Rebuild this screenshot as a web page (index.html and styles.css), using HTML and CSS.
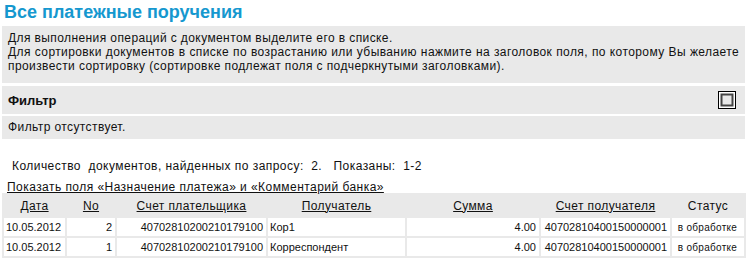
FILE: index.html
```html
<!DOCTYPE html>
<html lang="ru">
<head>
  <meta charset="UTF-8">
  <title>Все платежные поручения</title>
  <link rel="stylesheet" href="styles.css">
</head>
<body>
  <div class="page">
    <h1 class="title">Все платежные поручения</h1>

    <div class="hint">
      Для выполнения операций с документом выделите его в списке.<br>
      <span class="justify">Для сортировки документов в списке по возрастанию или убыванию нажмите на заголовок поля, по которому Вы желаете произвести сортировку (сортировке подлежат поля с подчеркнутыми заголовками).</span>
    </div>

    <div class="filter">
      <div class="filter-head">
        <span>Фильтр</span>
        <!-- expand button -->
        <svg class="filter-btn" width="18" height="18" viewBox="0 0 18 18">
          <rect x="0.5" y="0.5" width="17" height="17" fill="#fff" stroke="#000"/>
          <rect x="3.5" y="3.5" width="11" height="11" fill="#e9e9e9" stroke="#444" stroke-width="2"/>
        </svg>
      </div>
      <div class="filter-body">Фильтр отсутствует.</div>
    </div>

    <p class="count">Количество&nbsp; документов, найденных по запросу:&nbsp; 2.&nbsp;&nbsp; Показаны:&nbsp; 1-2</p>
    <a class="toggle" href="#">Показать поля «Назначение платежа» и «Комментарий банка»</a>

    <table class="docs">
      <thead>
        <tr>
          <th class="c-date"><a href="#">Дата</a></th>
          <th class="c-no"><a href="#">No</a></th>
          <th class="c-acc"><a href="#">Счет плательщика</a></th>
          <th class="c-rcp"><a href="#">Получатель</a></th>
          <th class="c-sum"><a href="#">Сумма</a></th>
          <th class="c-acc2"><a href="#">Счет получателя</a></th>
          <th class="c-st">Статус</th>
        </tr>
      </thead>
      <tbody>
        <tr>
          <td>10.05.2012</td>
          <td class="num">2</td>
          <td class="num">40702810200210179100</td>
          <td>Кор1</td>
          <td class="num">4.00</td>
          <td class="num">40702810400150000001</td>
          <td class="status">в обработке</td>
        </tr>
        <tr>
          <td>10.05.2012</td>
          <td class="num">1</td>
          <td class="num">40702810200210179100</td>
          <td>Корреспондент</td>
          <td class="num">4.00</td>
          <td class="num">40702810400150000001</td>
          <td class="status">в обработке</td>
        </tr>
      </tbody>
    </table>
  </div>
</body>
</html>
```

FILE: styles.css
```css
body {
  margin: 0;
  font-family: "Liberation Sans", Arial, sans-serif;
  font-size: 12px;
  color: #111;
  background: #fff;
}

.page {
  padding: 0 4px 0 2px;
}

.title {
  margin: 0;
  padding: 2px 0 0 2px;
  height: 24px;
  font-size: 18px;
  font-weight: bold;
  color: #1598cf;
}

.hint {
  background: #e9e9e9;
  padding: 5px 6px 10px 6px;
  line-height: 14px;
  letter-spacing: 0.4px;
}

.justify {
  display: block;
  text-align: justify;
}

.filter {
  margin-top: 3px;
}

.filter-head {
  display: flex;
  align-items: center;
  justify-content: space-between;
  height: 28px;
  padding: 0 9px 0 6px;
  background: #e9e9e9;
  font-size: 13px;
  font-weight: bold;
}

.filter-btn {
  display: block;
}

.filter-body {
  margin-top: 2px;
  height: 23px;
  line-height: 23px;
  padding: 0 6px;
  background: #e9e9e9;
  letter-spacing: 0.4px;
}

.count {
  margin: 20px 0 0 10px;
  line-height: 14px;
  letter-spacing: 0.45px;
}

.toggle {
  display: block;
  margin: 7px 0 0 5px;
  line-height: 14px;
  color: #111;
  letter-spacing: 0.45px;
}

.docs {
  margin-top: -1px;
  width: 744px;
  table-layout: fixed;
  border-collapse: separate;
  border-spacing: 2px;
  background: #e9e9e9;
}

.docs th,
.docs td {
  box-sizing: border-box;
  white-space: nowrap;
  overflow: hidden;
}

.docs th {
  height: 21px;
  padding: 0 3px;
  font-weight: normal;
  font-size: 12px;
  letter-spacing: 0.4px;
  text-align: center;
  background: #e9e9e9;
}

.docs th a {
  color: #111;
}

.docs td {
  height: 18px;
  padding: 0 3px 0 2px;
  font-size: 11px;
  background: #fff;
}

.docs td.num {
  text-align: right;
}

.docs td.status {
  font-size: 10px;
  letter-spacing: 0.3px;
  text-align: center;
}

.c-date { width: 61px; }
.c-no { width: 48px; }
.c-acc { width: 149px; }
.c-rcp { width: 137px; }
.c-sum { width: 132px; }
.c-acc2 { width: 129px; }
.c-st { width: 72px; }
```
